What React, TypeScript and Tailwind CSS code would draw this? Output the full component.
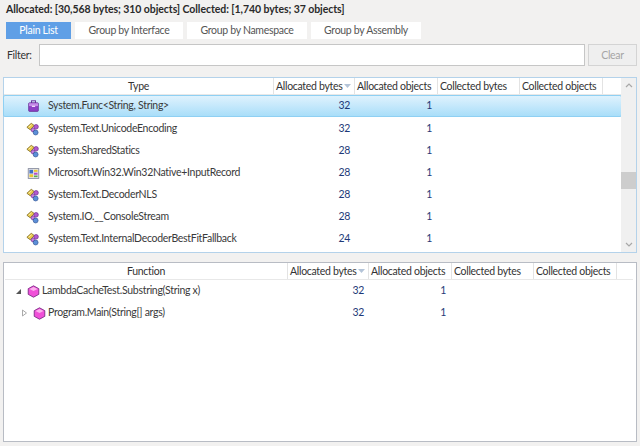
const font = { fontFamily: 'Lato, "Open Sans", sans-serif' };

function Wrapper() {
  return (
    <svg width="14" height="14" viewBox="0 0 16 16">
      <path d="M1 6 L6 1.5 L9.5 4 L5 9 Z" fill="#e8c84a" stroke="#7d6a24" strokeWidth="0.9" />
      <path d="M3 6 L6.5 3" stroke="#fff3b0" strokeWidth="1" />
      <circle cx="11.5" cy="5.5" r="2.6" fill="#b25ad0" stroke="#6d2d8c" strokeWidth="0.8" />
      <circle cx="8" cy="9" r="2.2" fill="#c77be0" stroke="#6d2d8c" strokeWidth="0.8" />
      <circle cx="11" cy="12" r="2.8" fill="#5c8fd8" stroke="#2f5596" strokeWidth="0.8" />
    </svg>
  );
}

function Delegate() {
  return (
    <svg width="13" height="13" viewBox="0 0 16 16">
      <rect x="5.5" y="1" width="5" height="3" fill="none" stroke="#6b2f9a" strokeWidth="1.2" />
      <rect x="2" y="3.5" width="12" height="10.5" rx="1" fill="#8d3fc4" stroke="#5d2488" strokeWidth="0.8" />
      <rect x="2.5" y="4" width="11" height="3.5" fill="#c58be8" />
      <rect x="6" y="7" width="4" height="1.6" fill="#f0dcfa" />
    </svg>
  );
}

function Struct() {
  return (
    <svg width="13" height="13" viewBox="0 0 16 16">
      <rect x="1.5" y="2" width="13" height="12" fill="#e8e8ec" stroke="#7c8296" strokeWidth="1" />
      <rect x="3" y="3.5" width="4.5" height="4.5" fill="#3f6fc4" />
      <rect x="8.5" y="3.5" width="4.5" height="2.5" fill="#e8c531" />
      <rect x="3" y="9" width="4.5" height="3.5" fill="#e8c531" />
      <rect x="8.5" y="7" width="4.5" height="2.5" fill="#b04fc8" />
      <rect x="8.5" y="10.5" width="4.5" height="2" fill="#58a84c" />
    </svg>
  );
}

function Hex() {
  return (
    <svg width="13" height="13" viewBox="0 0 16 16">
      <path d="M8 1 L14.5 4.5 V11.5 L8 15 L1.5 11.5 V4.5 Z" fill="#f050d8" stroke="#7a2a86" strokeWidth="1.1" />
      <path d="M3 5 L8 2.5 L13 5 L8 7.5 Z" fill="#fbb0ee" />
    </svg>
  );
}

const rows = [
  { n: "System.Func<String, String>", b: "32", i: <span className="pl-[1px]"><Delegate /></span>, sel: true },
  { n: "System.Text.UnicodeEncoding", b: "32", i: <Wrapper /> },
  { n: "System.SharedStatics", b: "28", i: <Wrapper /> },
  { n: "Microsoft.Win32.Win32Native+InputRecord", b: "28", i: <span className="pl-[1px]"><Struct /></span> },
  { n: "System.Text.DecoderNLS", b: "28", i: <Wrapper /> },
  { n: "System.IO.__ConsoleStream", b: "28", i: <Wrapper /> },
  { n: "System.Text.InternalDecoderBestFitFallback", b: "24", i: <Wrapper /> },
];

function Head({ w, children, sort, center }: { w: string; children: string; sort?: boolean; center?: boolean }) {
  return (
    <div className={`${w} shrink-0 h-full pt-[1px] relative flex items-center ${center ? "justify-center" : "justify-start pl-[2px]"} border-r border-[#e3e3e3] whitespace-nowrap`}>
      {children}
      {sort && (
        <svg className="absolute right-[3px] top-[6px]" width="7" height="4" viewBox="0 0 7 4">
          <path d="M0 0 H7 L3.5 4 Z" fill="#b4c4d8" />
        </svg>
      )}
    </div>
  );
}

function Tab({ children, active, w }: { children: string; active?: boolean; w: string }) {
  return (
    <div className={`${w} h-[17px] pt-[1px] flex items-center justify-center ${active ? "bg-[#5f9fe6] text-white" : "bg-white text-[#555]"}`}>
      {children}
    </div>
  );
}

export default function App() {
  return (
    <div style={font} className="w-[640px] h-[446px] overflow-hidden bg-[#f2f1f0] text-[10.5px] tracking-[-0.3px] text-[#333] flex flex-col">
      <div className="h-[22px] pl-[6px] pt-[2px] font-bold text-[10.5px] leading-[15px] tracking-[-0.07px] text-[#2a2a2a]">
        Allocated: [30,568 bytes; 310 objects] Collected: [1,740 bytes; 37 objects]
      </div>
      <div className="flex gap-[4px] pl-[6px]">
        <Tab active w="w-[65px]">Plain List</Tab>
        <Tab w="w-[108px]">Group by Interface</Tab>
        <Tab w="w-[120px]">Group by Namespace</Tab>
        <Tab w="w-[110px]">Group by Assembly</Tab>
      </div>
      <div className="flex items-center mt-[5px] pl-[7px] h-[22px]">
        <span className="w-[32px] pt-[1px] text-[#333]">Filter:</span>
        <div className="w-[546px] h-[22px] bg-white border border-[#c6c6c6]" />
        <div className="ml-[3px] w-[49px] h-[22px] pt-[1px] bg-[#efefef] border border-[#d4d4d4] flex items-center justify-center text-[#a5a5a5]">Clear</div>
      </div>

      <div className="mt-[11px] ml-[3px] w-[634px] h-[176px] bg-white border border-[#b4d2ea] flex">
        <div className="w-[617px] flex flex-col">
          <div className="h-[17px] flex border-b border-[#e8e8e8] bg-white">
            <Head w="w-[270px]" center>Type</Head>
            <Head w="w-[81px]" sort>Allocated bytes</Head>
            <Head w="w-[83px]">Allocated objects</Head>
            <Head w="w-[82px]">Collected bytes</Head>
            <Head w="w-[83px]">Collected objects</Head>
          </div>
          <div className="flex flex-col">
            {rows.map((r) => (
              <div key={r.n} className={`h-[22px] shrink-0 flex items-center ${r.sel ? "mb-[1px] bg-gradient-to-b from-[#dff2fd] to-[#a9def9] border border-[#8fd0f3] rounded-[2px] -ml-[1px] -mr-[1px]" : ""}`}>
                <div className="w-[270px] flex items-center pl-[22px] shrink-0">
                  <span className="w-[22px] flex justify-start shrink-0">{r.i}</span>
                  <span className="whitespace-nowrap text-[#3a3a3a]">{r.n}</span>
                </div>
                <div className="w-[81px] pr-[5px] text-right text-[#1e3a78] shrink-0">{r.b}</div>
                <div className="w-[83px] pr-[6px] text-right text-[#1e3a78] shrink-0">1</div>
              </div>
            ))}
          </div>
        </div>
        <div className="w-[15px] ml-auto bg-[#f0f0f0] flex flex-col items-center justify-between py-[5px]">
          <svg width="8" height="5" viewBox="0 0 8 5"><path d="M1 4 L4 1 L7 4" fill="none" stroke="#a8a8a8" strokeWidth="1.2" /></svg>
          <div className="w-full h-[17px] bg-[#cdcdcd] mt-[77px] mb-[47px]" />
          <svg width="8" height="5" viewBox="0 0 8 5"><path d="M1 1 L4 4 L7 1" fill="none" stroke="#a8a8a8" strokeWidth="1.2" /></svg>
        </div>
      </div>

      <div className="mt-[9px] ml-[3px] w-[634px] h-[180px] bg-white border border-[#b8bcc4] flex flex-col">
        <div className="h-[17px] flex border-b border-[#e8e8e8] ml-[1px] mr-[3px]">
          <Head w="w-[283px]" center>Function</Head>
          <Head w="w-[81px]" sort>Allocated bytes</Head>
          <Head w="w-[83px]">Allocated objects</Head>
          <Head w="w-[82px]">Collected bytes</Head>
          <Head w="w-[83px]">Collected objects</Head>
        </div>
        <div className="h-[22px] flex items-center ml-[1px]">
          <div className="w-[283px] flex items-center pl-[10px] shrink-0">
            <svg width="7" height="7" viewBox="0 0 7 7" className="mr-[5px]"><path d="M6 1 V6 H1 Z" fill="#555" /></svg>
            <Hex />
            <span className="ml-[2px] whitespace-nowrap text-[#3a3a3a]">LambdaCacheTest.Substring(String x)</span>
          </div>
          <div className="w-[81px] pr-[5px] text-right text-[#1e3a78]">32</div>
          <div className="w-[83px] pr-[6px] text-right text-[#1e3a78]">1</div>
        </div>
        <div className="h-[22px] flex items-center ml-[1px]">
          <div className="w-[283px] flex items-center pl-[16px] shrink-0">
            <svg width="7" height="8" viewBox="0 0 7 8" className="mr-[5px]"><path d="M1.5 1 L5.5 4 L1.5 7 Z" fill="#fff" stroke="#aaa" /></svg>
            <Hex />
            <span className="ml-[2px] whitespace-nowrap text-[#3a3a3a]">Program.Main(String[] args)</span>
          </div>
          <div className="w-[81px] pr-[5px] text-right text-[#1e3a78]">32</div>
          <div className="w-[83px] pr-[6px] text-right text-[#1e3a78]">1</div>
        </div>
      </div>
    </div>
  );
}
